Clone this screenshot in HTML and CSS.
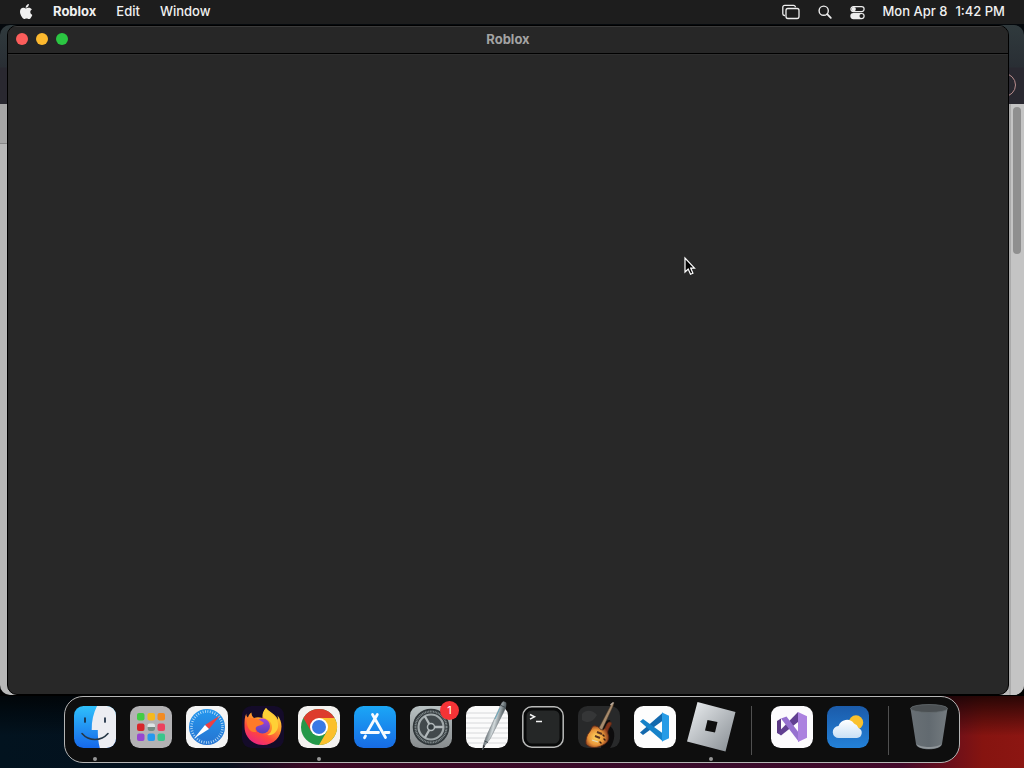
FILE: index.html
```html
<!DOCTYPE html>
<html lang="en">
<head>
  <meta charset="UTF-8">
  <meta name="viewport" content="width=device-width, initial-scale=1">
  <title>Roblox</title>
  <link rel="stylesheet" href="styles.css">
</head>
<body>

<header class="menubar">
  <nav class="menus">
    <button class="menu apple" aria-label="Apple menu">
      <svg width="14" height="16" viewBox="0 0 14 16" fill="#f0f0f0">
        <path d="M9.900 0c.1 1.200-.4 2.100-1 2.800-.6.7-1.400 1.100-2.200 1C6.500 2.800 7 1.800 7.600 1.200 8.200.5 9.100.1 9.900 0zM12.900 5.500c-1 .6-1.600 1.400-1.600 2.600 0 1.400.8 2.300 2 2.800-.3.900-.7 1.700-1.300 2.500-.6.9-1.200 1.600-2.100 1.600-.9 0-1.200-.5-2.300-.5-1.100 0-1.500.5-2.300.5-.9 0-1.600-.8-2.200-1.700C1.900 11.600 1 9.600 1 7.700c0-2.400 1.500-3.900 3.200-3.900 1 0 1.900.7 2.700.7.700 0 1.700-.7 2.900-.7 1.200 0 2.300.5 3.100 1.700z"/>
      </svg>
    </button>
    <button class="menu current">Roblox</button>
    <button class="menu">Edit</button>
    <button class="menu">Window</button>
  </nav>
  <div class="status">
    <button class="menu" aria-label="Screen mirroring">
      <svg width="18" height="16" viewBox="0 0 18 16" fill="none" stroke="#eee" stroke-width="1.300">
        <path d="M3 11.500h-.500A1.800 1.800 0 0 1 .8 9.700V3.200a1.900 1.900 0 0 1 1.900-1.900h8.800a1.900 1.900 0 0 1 1.900 1.900"/>
        <rect x="4" y="4.500" width="13" height="10" rx="1.900"/>
      </svg>
    </button>
    <button class="menu" aria-label="Search">
      <svg width="14" height="14" viewBox="0 0 14 14" fill="none" stroke="#eee" stroke-linecap="round">
        <circle cx="5.700" cy="5.700" r="4.600" stroke-width="1.400"/>
        <path d="M9.200 9.200l3.600 3.600" stroke-width="1.800"/>
      </svg>
    </button>
    <button class="menu" aria-label="Control Center">
      <svg width="15" height="15" viewBox="0 0 15 15">
        <rect x=".9" y="1.600" width="13.200" height="5" rx="2.500" fill="none" stroke="#eee" stroke-width="1.200"/>
        <circle cx="3.700" cy="4.100" r="2.200" fill="#eee"/>
        <rect x=".3" y="8" width="14.400" height="6.200" rx="3.100" fill="#eee"/>
        <circle cx="11.500" cy="11.100" r="2" fill="#1d1d1d"/>
      </svg>
    </button>
    <button class="menu clock"><span>Mon Apr 8</span><span>1:42 PM</span></button>
  </div>
</header>

<main class="workspace">
  <div class="browser">
    <div class="browser-top"><span class="browser-avatar"></span></div>
    <div class="browser-page">
      <div class="page-edge"></div>
      <div class="scrollbar"><div class="thumb"></div></div>
    </div>
  </div>

  <section class="window">
    <div class="titlebar">
      <div class="lights">
        <button class="light close" aria-label="Close"></button>
        <button class="light minimize" aria-label="Minimize"></button>
        <button class="light zoom" aria-label="Zoom"></button>
      </div>
      <h1 class="title">Roblox</h1>
    </div>
    <div class="canvas"></div>
  </section>

  <svg class="cursor" width="12" height="19" viewBox="0 0 12 19">
    <path d="M1 1v14l3.200-3 2.300 5.200 2.400-1-2.200-5.100H10.500z" fill="#050505" stroke="#fff" stroke-width="1.200"/>
  </svg>
</main>

<nav class="dock" aria-label="Dock">
  <button class="app running" aria-label="Finder">
    <svg viewBox="0 0 42 42">
      <defs>
        <linearGradient id="finder" x2="0" y2="1"><stop stop-color="#2fc0fb"/><stop offset="1" stop-color="#1668ea"/></linearGradient>
        <clipPath id="tile"><rect width="42" height="42" rx="9.500"/></clipPath>
      </defs>
      <g clip-path="url(#tile)">
        <rect width="42" height="42" fill="url(#finder)"/>
        <path d="M23 0c-3.500 7-5.500 15-5.300 24h6.100c0 7 .5 12 2 18H42V0z" fill="#ecedf2"/>
      </g>
      <path d="M11 12v4M31 12v4" stroke="#17293f" stroke-width="1.700" stroke-linecap="round"/>
      <path d="M8 27.500c7 8 19 8 26 0" fill="none" stroke="#263746" stroke-width="1.600" stroke-linecap="round"/>
    </svg>
  </button>
  <button class="app" aria-label="Launchpad">
    <svg viewBox="0 0 42 42">
      <rect width="42" height="42" rx="9.500" fill="#b3b2b4"/>
      <rect x="7" y="7" width="7.500" height="7.500" rx="2" fill="#43cc45"/>
      <rect x="17.500" y="7" width="7.500" height="7.500" rx="2" fill="#f5b91f"/>
      <rect x="27.500" y="7" width="7.500" height="7.500" rx="2" fill="#f28b22"/>
      <rect x="7" y="17.500" width="7.500" height="7.500" rx="2" fill="#d7252a"/>
      <rect x="17.500" y="17.500" width="7.500" height="7.500" rx="2" fill="#dfe5e5"/>
      <path d="M17.500 21h7.500v2a2 2 0 0 1-2 2h-3.500a2 2 0 0 1-2-2z" fill="#768a83"/>
      <rect x="27.500" y="17.500" width="7.500" height="7.500" rx="2" fill="#ec415e"/>
      <rect x="7" y="27.500" width="7.500" height="7.500" rx="2" fill="#9647d0"/>
      <rect x="17.500" y="27.500" width="7.500" height="7.500" rx="2" fill="#2698ee"/>
      <rect x="27.500" y="27.500" width="7.500" height="7.500" rx="2" fill="#38c68b"/>
    </svg>
  </button>
  <button class="app" aria-label="Safari">
    <svg viewBox="0 0 42 42">
      <defs>
        <linearGradient id="safari" x2="0" y2="1"><stop stop-color="#2497ee"/><stop offset="1" stop-color="#2674d1"/></linearGradient>
      </defs>
      <rect width="42" height="42" rx="9.500" fill="#f4f4f4"/>
      <circle cx="21" cy="21" r="18" fill="url(#safari)"/>
      <circle cx="21" cy="21" r="15.500" fill="none" stroke="#c5e4fa" stroke-width="2.600" stroke-dasharray=".8 1.635"/>
      <path d="M34 9.500L23 23l-4-4z" fill="#ed3f42"/>
      <path d="M8 32.500L19 19l4 4z" fill="#fff"/>
    </svg>
  </button>
  <button class="app" aria-label="Firefox">
    <svg viewBox="0 0 42 42">
      <defs>
        <linearGradient id="fox" x1=".8" y1="0" x2=".25" y2="1"><stop stop-color="#ffe43d"/><stop offset=".4" stop-color="#ff9b2b"/><stop offset=".7" stop-color="#ff463f"/><stop offset="1" stop-color="#e92188"/></linearGradient>
        <linearGradient id="foxglobe" x2="0" y2="1"><stop stop-color="#a644dc"/><stop offset="1" stop-color="#5641b9"/></linearGradient>
      </defs>
      <rect width="42" height="42" rx="9.500" fill="#140b29"/>
      <path d="M24 2c-3 3-4 7-3.500 10-3-1-6-1-8.500 0-2-1.500-2.500-3.500-2.500-5.500-2 1.300-3 3-3.500 5C4.500 10.500 4.200 9 4.300 7.500 2.500 11 2.500 15 2.500 20.500 2.500 31 10.500 39 21 39s18.500-8 18.500-18.500c0-4.500-1.500-8-4-11 .5 1.800.5 3 .3 4.200C33.500 7.500 27.500 6.500 24 2z" fill="url(#fox)"/>
      <path d="M24 2c-3 4-4 7-2 10 4 1 8 4 8 9 0 4-2 7-5 8 6 1 10-3 11-8 1-7-3-10-7-13-2-2-4-4-5-6z" fill="#ffd036"/>
      <circle cx="20.500" cy="20" r="7.500" fill="url(#foxglobe)"/>
      <path d="M5 13c5-2 12-1 17 4-1 2-4 2.500-6 3-3 1-3 4-1.500 6C8 27 4 21 5 13z" fill="#ff7a28"/>
    </svg>
  </button>
  <button class="app running" aria-label="Google Chrome">
    <svg viewBox="0 0 42 42">
      <rect width="42" height="42" rx="9.500" fill="#f4f2f0"/>
      <circle cx="21" cy="21" r="18" fill="#249849"/>
      <path d="M5.400 12A18 18 0 0 1 36.600 12H21L13.200 25.500z" fill="#dd3c2d"/>
      <path d="M36.600 12A18 18 0 0 1 21 39l7.800-13.500L21 12z" fill="#fbc02d"/>
      <circle cx="21" cy="21" r="9" fill="#fff"/>
      <circle cx="21" cy="21" r="7" fill="#3979e5"/>
    </svg>
  </button>
  <button class="app" aria-label="App Store">
    <svg viewBox="0 0 42 42">
      <defs>
        <linearGradient id="store" x2="0" y2="1"><stop stop-color="#1ba7f6"/><stop offset="1" stop-color="#176be4"/></linearGradient>
      </defs>
      <rect width="42" height="42" rx="9.500" fill="url(#store)"/>
      <g fill="none" stroke="#f6fbff" stroke-width="2.800" stroke-linecap="round">
        <path d="M23.300 8.500L13.500 25.500M18.500 8.500L31.500 31.500"/>
        <path d="M7.500 26.500h17M31 26.500h4M11.500 30l-1 1.700"/>
      </g>
    </svg>
  </button>
  <button class="app" aria-label="System Settings, 1 notification">
    <svg viewBox="0 0 42 42">
      <defs>
        <linearGradient id="settings" x2="0" y2="1"><stop stop-color="#b8c1c2"/><stop offset="1" stop-color="#888c8e"/></linearGradient>
      </defs>
      <rect width="42" height="42" rx="9.500" fill="url(#settings)"/>
      <circle cx="21" cy="21" r="18.300" fill="#31383b"/>
      <circle cx="21" cy="21" r="15.500" fill="none" stroke="#838c8e" stroke-width="2" stroke-dasharray="1 .623"/>
      <circle cx="21" cy="21" r="12.500" fill="#42494c" stroke="#a1a9ab" stroke-width="2.200"/>
      <path d="M21 21h12.500M21 21L14.700 10M21 21l-6.300 11" stroke="#b1b8ba" stroke-width="2.300"/>
      <circle cx="21" cy="21" r="3.500" fill="#343c3f" stroke="#b1b8ba" stroke-width="1.500"/>
    </svg>
    <span class="badge">1</span>
  </button>
  <button class="app" aria-label="TextEdit">
    <svg viewBox="0 0 42 42">
      <defs>
        <linearGradient id="pen" x1=".3" y1=".4" x2=".7" y2=".6"><stop stop-color="#6b757a"/><stop offset=".45" stop-color="#d3dadc"/><stop offset="1" stop-color="#5a6468"/></linearGradient>
      </defs>
      <rect width="42" height="42" rx="9.500" fill="#fbfbfb"/>
      <path d="M1 7h40M0 12h42M0 17h42M0 22h42M0 27h42M0 32h42M2 37h38" stroke="#cfd1d3" stroke-width=".8"/>
      <path d="M36-3.500l1.500-1 2.500 1.200v2.300l-1 4.500L24 33l-5.500 7-2 4 .8-5L20 31 33 3z" fill="url(#pen)" stroke="#6c757a" stroke-width=".5"/>
      <path d="M34 2L29 13" stroke="#69a9bc" stroke-width="1"/>
      <path d="M35-.5l4.500 2M18.500 35l3.500 1.500" fill="none" stroke="#414b50"/>
      <path d="M16.500 44l.8-5 1.800 1z" fill="#303437"/>
    </svg>
  </button>
  <button class="app" aria-label="Terminal">
    <svg viewBox="0 0 42 42">
      <rect x=".8" y=".8" width="40.400" height="40.400" rx="9" fill="#080909" stroke="#b9bab9" stroke-width="1.500"/>
      <rect x="4.500" y="4.500" width="33" height="33" rx="5.500" fill="#252727"/>
      <path d="M8 8.500l4.500 2.300L8 13.200M14 15.500h6" fill="none" stroke="#f4f4f4" stroke-width="1.500"/>
    </svg>
  </button>
  <button class="app" aria-label="GarageBand">
    <svg viewBox="0 0 42 42">
      <defs>
        <radialGradient id="guitar" cx=".4" cy=".6"><stop stop-color="#ffd65e"/><stop offset=".6" stop-color="#e8953a"/><stop offset="1" stop-color="#83351b"/></radialGradient>
      </defs>
      <rect width="42" height="42" rx="9.500" fill="#28292a"/>
      <path d="M4 8c4-5 11-4 15 1-4 7-9 9-15 5z" fill="#353637"/>
      <path d="M25 20c2-5 4-6 7-6 1 3-1 5 1 7 5 4 4 14-1 21h-9z" fill="#0d0c0d"/>
      <path d="M17.500 20c-4-1-4 4-6 6-3 3-4 8-3.500 12 4 5 12 4 17 1 5-2 7-7 5-11-1-3 1-6 3-9 1-2 0-3-1-3-4 0-4 7-7 8-3 0-4-4-7.500-4z" fill="url(#guitar)" stroke="#582715" stroke-width=".8"/>
      <path d="M21 22L32.500 0l1-2.500 2.500-1-1 3.500L24 24z" fill="#a78b6d" stroke="#54402f" stroke-width=".5"/>
      <path d="M19 26l5 2M17 30l5 2" stroke="#5b3420" stroke-width="2"/>
      <path d="M14 34l6 2" stroke="#e2d9bd" stroke-width="1.300"/>
      <path d="M32.500-1l3-2.500" stroke="#b8aca0" stroke-width="1.600"/>
      <path d="M25 29l1 1M26 33l1 1M22 36l1 1" stroke="#3a1d10" stroke-width="1.500" stroke-linecap="round"/>
    </svg>
  </button>
  <button class="app" aria-label="Visual Studio Code">
    <svg viewBox="0 0 42 42">
      <rect width="42" height="42" rx="9.500" fill="#fdfdfd"/>
      <path d="M6 26.500l3 2.500L29 14.500v-8z" fill="#1369ae"/>
      <path d="M6 15.500L9 13l20 14.500v8z" fill="#1682c9"/>
      <path d="M28 6.500l7 3.200v22.600l-7 3.200z" fill="#269be6"/>
    </svg>
  </button>
  <button class="app running" aria-label="Roblox">
    <svg viewBox="0 0 42 42">
      <defs>
        <linearGradient id="roblox" x2="1" y2="1"><stop stop-color="#edf0f2"/><stop offset="1" stop-color="#858b91"/></linearGradient>
      </defs>
      <path d="M7.500-4L45.500 6 35.500 45.500-3 35.500zM17.500 14l-2.500 10.500 10 2L27.500 16z" fill="url(#roblox)" fill-rule="evenodd"/>
    </svg>
  </button>

  <span class="divider"></span>

  <button class="app" aria-label="Visual Studio">
    <svg viewBox="0 0 42 42">
      <rect width="42" height="42" rx="9.500" fill="#fcfbfd"/>
      <path d="M6 15l4-2.500v16L6 27z" fill="#5b3884"/>
      <path d="M10 29.500L6.500 27 27 6v10z" fill="#613f91"/>
      <path d="M10 12.500l5.500-2L28 27v9z" fill="#9671cf"/>
      <path d="M27 6l9 4.200v21.600L27 36z" fill="#ab81df"/>
    </svg>
  </button>
  <button class="app" aria-label="Weather">
    <svg viewBox="0 0 42 42">
      <defs>
        <linearGradient id="sky" x2="0" y2="1"><stop stop-color="#1b5baa"/><stop offset="1" stop-color="#2381d8"/></linearGradient>
        <linearGradient id="cloud" x2="0" y2="1"><stop stop-color="#fff"/><stop offset="1" stop-color="#c9e0f6"/></linearGradient>
      </defs>
      <rect width="42" height="42" rx="9.500" fill="url(#sky)"/>
      <circle cx="29" cy="16.500" r="7.200" fill="#fac12c"/>
      <path d="M12 32a6 6 0 0 1-.5-12A8.800 8.800 0 0 1 27 17.500a7 7 0 0 1 4.500 4.500A5.200 5.200 0 0 1 30 32z" fill="url(#cloud)"/>
    </svg>
  </button>

  <span class="divider"></span>

  <button class="app" aria-label="Trash">
    <svg viewBox="0 0 42 42">
      <defs>
        <linearGradient id="bin"><stop stop-color="#697075"/><stop offset=".5" stop-color="#626a70"/><stop offset="1" stop-color="#747b7f"/></linearGradient>
      </defs>
      <path d="M2.500 2.500L8 38c.8 7 25 7 26 0l5.500-35.500z" fill="url(#bin)"/>
      <ellipse cx="21" cy="2.500" rx="18.500" ry="4" fill="#4b5053" stroke="#656c70" stroke-width=".8"/>
      <path d="M8.500 38c4 4 21 4 25 0-1.500 6.500-24 6.500-25 0z" fill="#91979b"/>
    </svg>
  </button>
</nav>

</body>
</html>
```
FILE: styles.css
```css
* {
  box-sizing: border-box;
}

body {
  margin: 0;
  height: 100vh;
  display: flex;
  flex-direction: column;
  overflow: hidden;
  color: #f0f0f0;
  font-family: Inter, "Liberation Sans", sans-serif;
  font-size: 13px;
  background:
    linear-gradient(to bottom, rgba(0, 0, 0, 0.7), rgba(0, 0, 0, 0) 40px) bottom / 100% 72px no-repeat,
    linear-gradient(to right, #02131f, #04101d 22%, #3c0824 30%, #390b2b 70%, #43092a 88%, #861410 96%, #8c1612);
}

button {
  padding: 0;
  border: none;
  background: none;
  color: inherit;
  font: inherit;
}

svg {
  display: block;
  overflow: visible;
}

.menubar {
  height: 24px;
  padding: 0 19px;
  display: flex;
  align-items: center;
  justify-content: space-between;
  background: #1d1d1d;
}

.menus,
.status {
  display: flex;
  align-items: center;
  gap: 20px;
}

.menu {
  font-weight: 500;
  line-height: 22px;
  padding-bottom: 2px;
}

.menu svg {
  margin-top: 2px;
}

.current {
  font-weight: 700;
}

.status {
  gap: 18px;
}

.clock {
  display: flex;
  gap: 8px;
}

.workspace {
  position: relative;
  flex: 1;
  display: flex;
  padding: 1px 15px 1px 7px;
  background: linear-gradient(#05090d, #000);
}

/* browser window showing round the edges of the front one */
.browser {
  position: absolute;
  inset: 1px 0 1px 0;
  display: flex;
  flex-direction: column;
  border-radius: 10px;
  overflow: hidden;
}

.browser-top {
  height: 79px;
  display: flex;
  align-items: flex-end;
  justify-content: flex-end;
  padding: 7px 8px;
  background: linear-gradient(#303a3d, #292e34 42px, #292830 43px);
}

.browser-avatar {
  width: 24px;
  height: 24px;
  border: 1px solid #b98d8d;
  border-radius: 50%;
}

.browser-page {
  flex: 1;
  display: flex;
  justify-content: space-between;
  background: #b8b8b8;
}

.page-edge {
  width: 7px;
  height: 40px;
  border-bottom: 1px solid #888;
  background: #a6a6a6;
}

.scrollbar {
  width: 15px;
  padding: 3px 3px 3px 2px;
  border-left: 2px solid #aaa;
  background: #c4c4c4;
}

.thumb {
  width: 8px;
  height: 147px;
  border-radius: 4px;
  background: #8f8f8f;
}

.window {
  position: relative;
  flex: 1;
  display: flex;
  flex-direction: column;
  border: 1px solid #000;
  border-radius: 10px;
  overflow: hidden;
  background: #282828;
}

.titlebar {
  height: 28px;
  display: grid;
  grid-template-columns: 1fr auto 1fr;
  align-items: center;
  padding: 0 8px 2px;
  border-top: 1px solid #3b3b3b;
  border-bottom: 1px solid #000;
  background: #272727;
}

.lights {
  display: flex;
  gap: 8px;
}

.light {
  width: 12px;
  height: 12px;
  border-radius: 50%;
}

.close {
  background: #fc5d5b;
}

.minimize {
  background: #fdb92e;
}

.zoom {
  background: #2bc642;
}

.title {
  margin: 0;
  font-size: 13px;
  line-height: 16px;
  font-weight: 700;
  color: #a3a3a3;
}

.canvas {
  flex: 1;
  border-top: 1px solid #303030;
}

.cursor {
  position: absolute;
  left: 684px;
  top: 233px;
}

.dock {
  position: relative;
  align-self: center;
  height: 67px;
  margin: 0 0 5px;
  padding: 9px;
  display: flex;
  align-items: flex-start;
  gap: 14px;
  border: 1px solid #b5b5b5;
  border-radius: 19px;
  background: #0e0e0e;
}

.app {
  position: relative;
  width: 42px;
  height: 42px;
}

.app svg {
  width: 42px;
  height: 42px;
}

.running::after {
  content: "";
  position: absolute;
  left: 19px;
  top: 51px;
  width: 4px;
  height: 4px;
  border-radius: 50%;
  background: #969696;
}

.badge {
  position: absolute;
  top: -5px;
  right: -7px;
  width: 19px;
  height: 19px;
  border-radius: 50%;
  background: #f53336;
  color: #fff;
  font-size: 11px;
  line-height: 19px;
  text-align: center;
}

.divider {
  width: 1px;
  height: 49px;
  margin: 0 5px;
  background: #505050;
}
```
